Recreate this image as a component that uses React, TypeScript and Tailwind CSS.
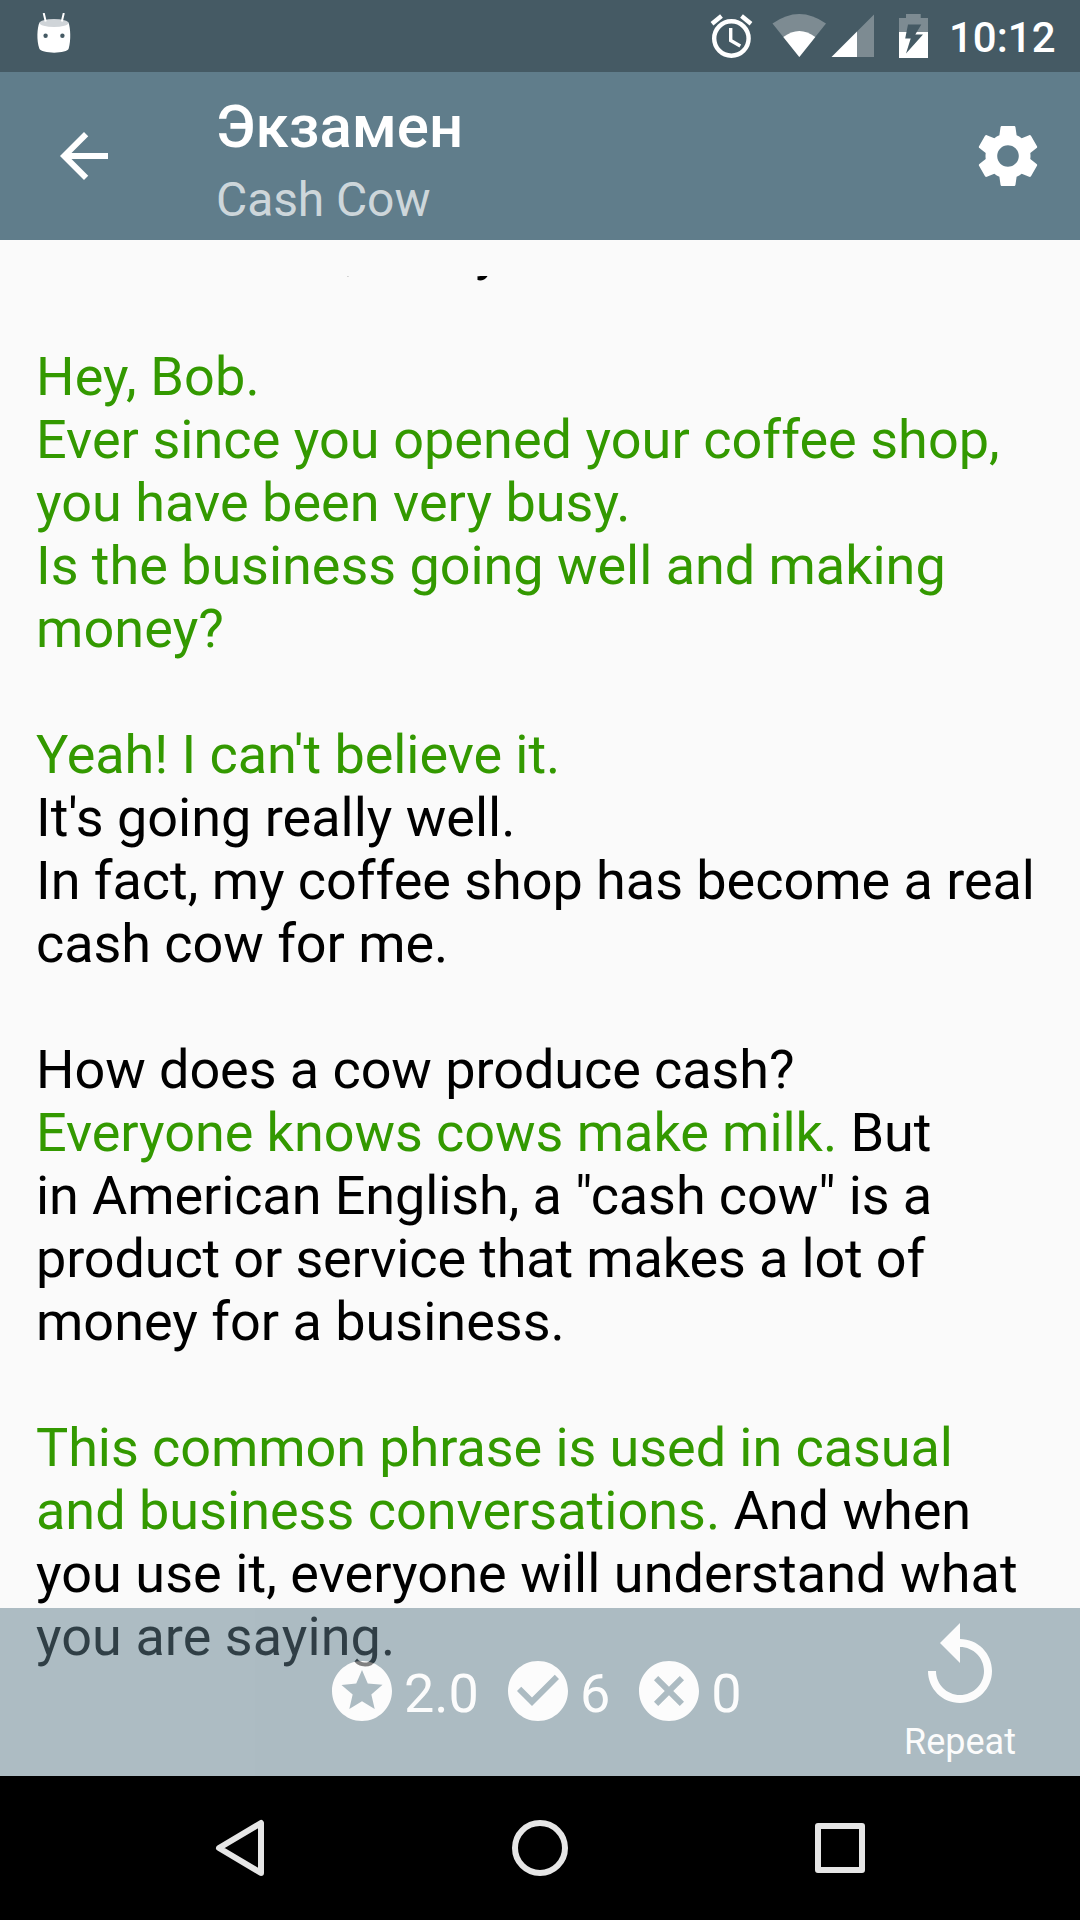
import type { ReactNode } from 'react';

type Part = { text: string; known?: boolean };

const lines: { parts: Part[]; tracking?: string }[] = [
  { parts: [{ text: 'Hello friends, Harry' }], tracking: 'tracking-[0.3px]' },
  { parts: [] },
  { parts: [{ text: 'Hey, Bob.', known: true }], tracking: 'tracking-[0.14px]' },
  { parts: [{ text: 'Ever since you opened your coffee shop,', known: true }], tracking: 'tracking-[0.05px]' },
  { parts: [{ text: 'you have been very busy.', known: true }], tracking: 'tracking-[0.04px]' },
  { parts: [{ text: 'Is the business going well and making', known: true }], tracking: 'tracking-[-0.04px]' },
  { parts: [{ text: 'money?', known: true }], tracking: 'tracking-[0.1px]' },
  { parts: [] },
  { parts: [{ text: "Yeah! I can't believe it.", known: true }], tracking: 'tracking-[-0.05px]' },
  { parts: [{ text: "It's going really well." }] },
  { parts: [{ text: 'In fact, my coffee shop has become a real' }], tracking: 'tracking-[-0.04px]' },
  { parts: [{ text: 'cash cow for me.' }], tracking: 'tracking-[-0.06px]' },
  { parts: [] },
  { parts: [{ text: 'How does a cow produce cash?' }], tracking: 'tracking-[-0.07px]' },
  { parts: [{ text: 'Everyone knows cows make milk.', known: true }, { text: ' But' }], tracking: 'tracking-[-0.05px]' },
  { parts: [{ text: 'in American English, a "cash cow" is a' }], tracking: 'tracking-[-0.1px]' },
  { parts: [{ text: 'product or service that makes a lot of' }], tracking: 'tracking-[-0.14px]' },
  { parts: [{ text: 'money for a business.' }] },
  { parts: [] },
  { parts: [{ text: 'This common phrase is used in casual', known: true }], tracking: 'tracking-[-0.07px]' },
  { parts: [{ text: 'and business conversations.', known: true }, { text: ' And when' }] },
  { parts: [{ text: 'you use it, everyone will understand what' }], tracking: 'tracking-[0.06px]' },
  { parts: [{ text: 'you are saying.' }], tracking: 'tracking-[0.07px]' },
];

function Icon({ d, className }: { d: string; className: string }) {
  return (
    <svg viewBox="0 0 24 24" fill="currentColor" className={`shrink-0 ${className}`}>
      <path d={d} />
    </svg>
  );
}

const paths = {
  back: 'M20 11H7.83l5.59-5.59L12 4l-8 8 8 8 1.41-1.41L7.83 13H20v-2z',
  settings:
    'M19.43 12.98c.04-.32.07-.64.07-.98s-.03-.66-.07-.98l2.11-1.65c.19-.15.24-.42.12-.64l-2-3.46c-.12-.22-.39-.3-.61-.22l-2.49 1c-.52-.4-1.08-.73-1.69-.98l-.38-2.65C14.46 2.18 14.25 2 14 2h-4c-.25 0-.46.18-.49.42l-.38 2.65c-.61.25-1.17.59-1.69.98l-2.49-1c-.23-.09-.49 0-.61.22l-2 3.46c-.13.22-.07.49.12.64l2.11 1.65c-.04.32-.07.65-.07.98s.03.66.07.98l-2.11 1.65c-.19.15-.24.42-.12.64l2 3.46c.12.22.39.3.61.22l2.49-1c.52.4 1.08.73 1.69.98l.38 2.65c.03.24.24.42.49.42h4c.25 0 .46-.18.49-.42l.38-2.65c.61-.25 1.17-.59 1.69-.98l2.49 1c.23.09.49 0 .61-.22l2-3.46c.12-.22.07-.49-.12-.64l-2.11-1.65zM12 15.6c-1.98 0-3.6-1.62-3.6-3.6s1.62-3.6 3.6-3.6 3.6 1.62 3.6 3.6-1.62 3.6-3.6 3.6z',
  star: 'M11.99 2C6.47 2 2 6.48 2 12s4.47 10 9.99 10C17.52 22 22 17.52 22 12S17.52 2 11.99 2zm4.24 16L12 15.45 7.77 18l1.12-4.81-3.73-3.23 4.92-.42L12 5l1.92 4.53 4.92.42-3.73 3.23L16.23 18z',
  check:
    'M12 2C6.48 2 2 6.48 2 12s4.48 10 10 10 10-4.48 10-10S17.52 2 12 2zm-2 15l-5-5 1.41-1.41L10 14.17l7.59-7.59L19 8l-9 9z',
  cancel:
    'M12 2C6.47 2 2 6.47 2 12s4.47 10 10 10 10-4.47 10-10S17.53 2 12 2zm5 13.59L15.59 17 12 13.41 8.41 17 7 15.59 10.59 12 7 8.41 8.41 7 12 10.59 15.59 7 17 8.41 13.41 12 17 15.59z',
  replay:
    'M12 5V1L7 6l5 5V7c3.31 0 6 2.69 6 6s-2.69 6-6 6-6-2.69-6-6H4c0 4.42 3.58 8 8 8s8-3.58 8-8-3.58-8-8-8z',
};

function StatusBar() {
  return (
    <div className="flex h-[72px] shrink-0 items-center bg-[#455a64] text-white">
      {/* Marshmallow notification icon */}
      <svg viewBox="0 0 40 46" className="ml-[34px] h-[46px] w-[40px]">
        <path
          d="M5.5 9.500C10 13 30 13 34.500 9.500C36.500 15 37.200 27 34.700 35.500C33.500 41 7 41 5.300 35.500C2.500 27 3 15 5.500 9.500z"
          fill="#fff"
        />
        <ellipse cx="20" cy="10" rx="14.500" ry="4" fill="#cfd4d8" />
        <path d="M9.700 0l2 8.500M29.800 0l-2 8.500" stroke="#fff" strokeWidth="2" />
        <circle cx="11.600" cy="22.800" r="2.200" fill="#455a64" />
        <circle cx="28.400" cy="22.800" r="2.200" fill="#455a64" />
      </svg>
      <svg viewBox="0 0 240 72" className="ml-[626px] h-[72px] w-[240px]">
        {/* alarm */}
        <g stroke="#fff" fill="none">
          <circle cx="31.400" cy="38.500" r="17.200" strokeWidth="4.400" />
          <path d="M30.700 28v12.500l9.600 5.500" strokeWidth="3.400" />
          <path d="M12 23.800l9.500-7.800M51 23.800l-9.500-7.800" strokeWidth="4.400" />
        </g>
        {/* wifi */}
        <path d="M72.500 23.500Q99.300 4.500 126 23.500L99.300 57z" fill="#fff" fillOpacity=".3" />
        <path d="M83.300 37Q99.300 25 115.300 37L99.300 57z" fill="#fff" />
        {/* signal */}
        <path d="M174 14.500V57h-17V31.500z" fill="#fff" fillOpacity=".3" />
        <path d="M157 31.500V57h-25.500z" fill="#fff" />
        {/* battery */}
        <path d="M199 32V18h7v-4h14.700v4h7.300v14z" fill="#fff" fillOpacity=".3" />
        <path d="M199 32h29v26h-29z" fill="#fff" />
        <path d="M208 24.500h13.300l-6 10h7.700L206 53.500l4.700-15h-5.500z" fill="#455a64" />
      </svg>
      <span className="mt-[3px] ml-[9px] text-[42px] leading-none font-medium">10:12</span>
    </div>
  );
}

function Toolbar() {
  return (
    <div className="flex h-[168px] shrink-0 items-center bg-[#607d8b] text-white">
      <Icon d={paths.back} className="ml-12 size-[72px]" />
      <div className="ml-24 flex flex-1 flex-col gap-[10px] pt-2">
        <div className="text-[60px] leading-[70px] font-medium">Экзамен</div>
        <div className="text-[48px] leading-[56px] tracking-[-0.1px] text-white/70">Cash Cow</div>
      </div>
      <Icon d={paths.settings} className="mr-9 size-[72px]" />
    </div>
  );
}

function Score({ d, children }: { d: string; children: ReactNode }) {
  return (
    <div className="flex items-center">
      <Icon d={d} className="size-[72px]" />
      <span className="mt-1 ml-[6px] text-[54px] leading-[63px]">{children}</span>
    </div>
  );
}

function ScoreBar() {
  return (
    <div className="absolute inset-x-0 bottom-0 flex h-[168px] bg-[#607d8b] text-white opacity-50">
      <div className="ml-[326px] flex flex-1 items-center gap-[23px] pb-[2px]">
        <Score d={paths.star}>2.0</Score>
        <Score d={paths.check}>6</Score>
        <Score d={paths.cancel}>0</Score>
      </div>
      <div className="mr-6 flex w-48 flex-col items-center gap-[6px] pt-[11px]">
        <Icon d={paths.replay} className="size-24" />
        <span className="text-[36px] leading-[42px]">Repeat</span>
      </div>
    </div>
  );
}

function NavBar() {
  return (
    <div className="flex h-36 shrink-0 items-center justify-center bg-black">
      <svg viewBox="0 0 660 60" fill="none" stroke="#e6e6e6" strokeWidth="6" strokeLinejoin="round" className="h-[60px] w-[660px]">
        <path d="M51 5v50L9 30z" />
        <circle cx="330" cy="30" r="25" />
        <rect x="608" y="8" width="44" height="44" />
      </svg>
    </div>
  );
}

export default function App() {
  return (
    <div className="flex h-[1920px] w-[1080px] flex-col overflow-hidden bg-[#fafafa] font-['Roboto',sans-serif]">
      <StatusBar />
      <Toolbar />
      <div className="relative flex-1 overflow-hidden pt-9">
        {/* Scrolled transcript, first line is mostly out of view */}
        <div className="h-full overflow-hidden px-9">
          <div className="-mt-[57px] text-[54px] leading-[63px] whitespace-pre text-black">
            {lines.map((line, i) => (
              <div key={i} className={`h-[63px] ${line.tracking ?? ''}`}>
                {line.parts.map((part, j) => (
                  <span key={j} className={part.known ? 'text-[#339900]' : ''}>{part.text}</span>
                ))}
              </div>
            ))}
          </div>
        </div>
        <ScoreBar />
      </div>
      <NavBar />
    </div>
  );
}
